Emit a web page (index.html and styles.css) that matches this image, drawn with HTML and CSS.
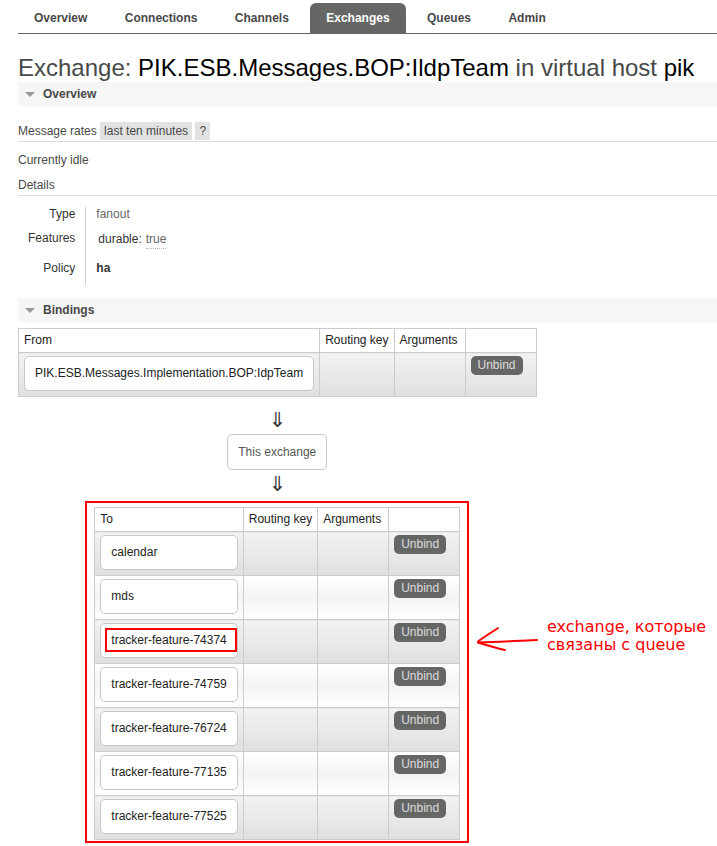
FILE: index.html
```html
<!DOCTYPE html>
<html>
<head>
<meta charset="utf-8">
<title>Exchange</title>
<link rel="stylesheet" href="styles.css">
</head>
<body>
<div class="page">
  <nav class="menu">
    <ul>
      <li>Overview</li>
      <li>Connections</li>
      <li>Channels</li>
      <li class="active">Exchanges</li>
      <li>Queues</li>
      <li>Admin</li>
    </ul>
  </nav>

  <h1 class="title"><span class="dim">Exchange:</span> PIK.ESB.Messages.BOP:IldpTeam <span class="dim">in virtual host</span> pik</h1>

  <section class="section">
    <h2 class="bar"><span class="tri"></span>Overview</h2>
    <div class="hider">
      <h3 class="sub">Message rates <span class="opt">last ten minutes</span> <span class="opt">?</span></h3>
      <p class="idle">Currently idle</p>
      <h3 class="sub">Details</h3>
      <table class="facts">
        <tr><th>Type</th><td>fanout</td></tr>
        <tr><th>Features</th><td><div class="mini"><span class="mini-key">durable:</span><span class="mini-val">true</span></div></td></tr>
        <tr><th>Policy</th><td><span class="policy">ha</span></td></tr>
      </table>
    </div>
  </section>

  <section class="section">
    <h2 class="bar"><span class="tri"></span>Bindings</h2>
    <div class="bindings">
      <table class="list">
        <tr><th>From</th><th>Routing key</th><th>Arguments</th><th></th></tr>
        <tr class="alt1"><td><span class="obj">PIK.ESB.Messages.Implementation.BOP:IdpTeam</span></td><td></td><td></td><td><span class="btn">Unbind</span></td></tr>
      </table>
      <div class="arrow arrow-1">&#8659;</div>
      <div class="obj this">This exchange</div>
      <div class="arrow arrow-2">&#8659;</div>
      <div class="mark">
        <table class="list">
          <tr><th>To</th><th>Routing key</th><th>Arguments</th><th></th></tr>
          <tr class="alt1"><td><span class="obj">calendar</span></td><td></td><td></td><td><span class="btn">Unbind</span></td></tr>
          <tr class="alt2"><td><span class="obj">mds</span></td><td></td><td></td><td><span class="btn">Unbind</span></td></tr>
          <tr class="alt1"><td><span class="obj hl">tracker-feature-74374<span class="hl-box"></span></span></td><td></td><td></td><td><span class="btn">Unbind</span></td></tr>
          <tr class="alt2"><td><span class="obj">tracker-feature-74759</span></td><td></td><td></td><td><span class="btn">Unbind</span></td></tr>
          <tr class="alt1"><td><span class="obj">tracker-feature-76724</span></td><td></td><td></td><td><span class="btn">Unbind</span></td></tr>
          <tr class="alt2"><td><span class="obj">tracker-feature-77135</span></td><td></td><td></td><td><span class="btn">Unbind</span></td></tr>
          <tr class="alt1"><td><span class="obj">tracker-feature-77525</span></td><td></td><td></td><td><span class="btn">Unbind</span></td></tr>
        </table>
      </div>
    </div>
  </section>

  <svg class="note-arrow" width="75" height="40" viewBox="0 0 75 40" aria-hidden="true">
    <path d="M67 20 C 50 20.5, 30 22, 8 22.5" />
    <path d="M28 8 C 22 12, 14 17, 8 21.5" />
    <path d="M8 22.5 C 16 25, 26 28, 35 30" />
  </svg>
  <div class="note">exchange, которые<br>связаны с queue</div>
</div>
</body>
</html>
```

FILE: styles.css
```css
* { box-sizing: border-box; }
html, body { margin: 0; padding: 0; background: #fff; }
body {
  font-family: "Liberation Sans", Arial, sans-serif;
  font-size: 12px;
  line-height: 14px;
  color: #484848;
}
.page {
  position: relative;
  width: 717px;
  height: 846px;
  overflow: hidden;
  padding-left: 18px;
}

/* menu */
.menu ul {
  list-style: none;
  margin: 3px 0 0;
  padding: 0;
  display: flex;
  gap: 5.4px;
  border-bottom: 1px solid #666;
}
.menu li {
  padding: 8px 16px;
  font-weight: bold;
  color: #484848;
  border-radius: 6px 6px 0 0;
}
.menu li.active { background: #666; color: #fff; }

/* title */
.title {
  margin: 20px 0 0;
  font-size: 24px;
  line-height: 28px;
  font-weight: normal;
  color: #000;
  white-space: nowrap;
}
.title .dim { color: #484848; }

/* sections */
.bar {
  margin: 0;
  height: 24px;
  padding: 5px 0 5px 7px;
  background: #f6f6f6;
  font-size: 12px;
  line-height: 14px;
  font-weight: bold;
  color: #484848;
  display: flex;
  align-items: center;
}
.tri {
  width: 0;
  height: 0;
  border-left: 5px solid transparent;
  border-right: 5px solid transparent;
  border-top: 5px solid #999;
  margin-right: 8px;
}
.hider { padding-top: 18px; }
.sub {
  margin: 0;
  font-size: 12px;
  line-height: 14px;
  font-weight: normal;
  padding-bottom: 3px;
  border-bottom: 1px solid #ddd;
}
.idle + .sub { margin-top: 11px; }
.opt { background: #e2e2e2; padding: 2px 4px; }
.idle { margin: 11px 0 0; }

.facts {
  border-collapse: collapse;
  margin: 11px 0 13px;
}
.facts th {
  text-align: right;
  font-weight: normal;
  color: #333;
  padding: 0 10px 10px;
  vertical-align: top;
}
.facts td {
  border-left: 1px solid #ccc;
  padding: 0 10px 10px;
  vertical-align: top;
  color: #666;
}
.mini { display: flex; height: 20px; padding-left: 2px; padding-top: 1px; }
.mini-key { color: #333; margin-right: 4px; }
.mini-val { height: 17px; padding-bottom: 2px; border-bottom: 1px dotted #bbb; color: #666; }
.policy { font-weight: bold; color: #333; }

/* bindings */
.bindings {
  display: inline-flex;
  flex-direction: column;
  align-items: center;
  margin-top: 6px;
}
.list { border-collapse: collapse; }
.list th, .list td {
  box-sizing: content-box;
  border: 1px solid #ccc;
  text-align: left;
  vertical-align: top;
  min-width: 60px;
}
.list th {
  font-weight: normal;
  color: #222;
  background: #fff;
  padding: 4px 5px 5px;
}
.list td { padding: 3px 5px 5px; }
.alt1 td { background: linear-gradient(#f2f2f2, #e0e0e0); }
.alt2 td { background: linear-gradient(#ffffff, #f4f4f4 50%, #ffffff); }

.obj {
  display: block;
  position: relative;
  background: #fff;
  border: 1px solid #c8c8c8;
  border-radius: 5px;
  padding: 10px;
  line-height: 13px;
  color: #222;
  white-space: nowrap;
}
.obj.this {
  display: block;
  line-height: 14px;
  color: #555;
  margin-top: 2px;
}
.hl-box {
  position: absolute;
  left: 4px;
  top: 4px;
  right: 0;
  bottom: 5px;
  border: 2px solid #f00;
}
.btn {
  display: inline-block;
  background: #666;
  color: #ddd;
  border-radius: 5px;
  padding: 2px 7px;
  line-height: 15px;
}
.arrow {
  font-family: "DejaVu Sans", sans-serif;
  font-size: 21px;
  line-height: 24px;
  height: 24px;
  color: #333;
}
.arrow-1 { margin-top: 11px; }
.arrow-2 { margin-top: 2px; }
.mark {
  margin-top: 5px;
  border: 2px solid #f00;
  padding: 4px 7px 1px;
}

/* annotation */
.note-arrow {
  position: absolute;
  left: 470px;
  top: 620px;
  fill: none;
  stroke: #f00;
  stroke-width: 2;
  stroke-linecap: round;
}
.note {
  position: absolute;
  left: 547px;
  top: 618px;
  font-family: "DejaVu Sans", sans-serif;
  font-size: 16px;
  line-height: 18px;
  color: #f00;
  white-space: nowrap;
}
```
